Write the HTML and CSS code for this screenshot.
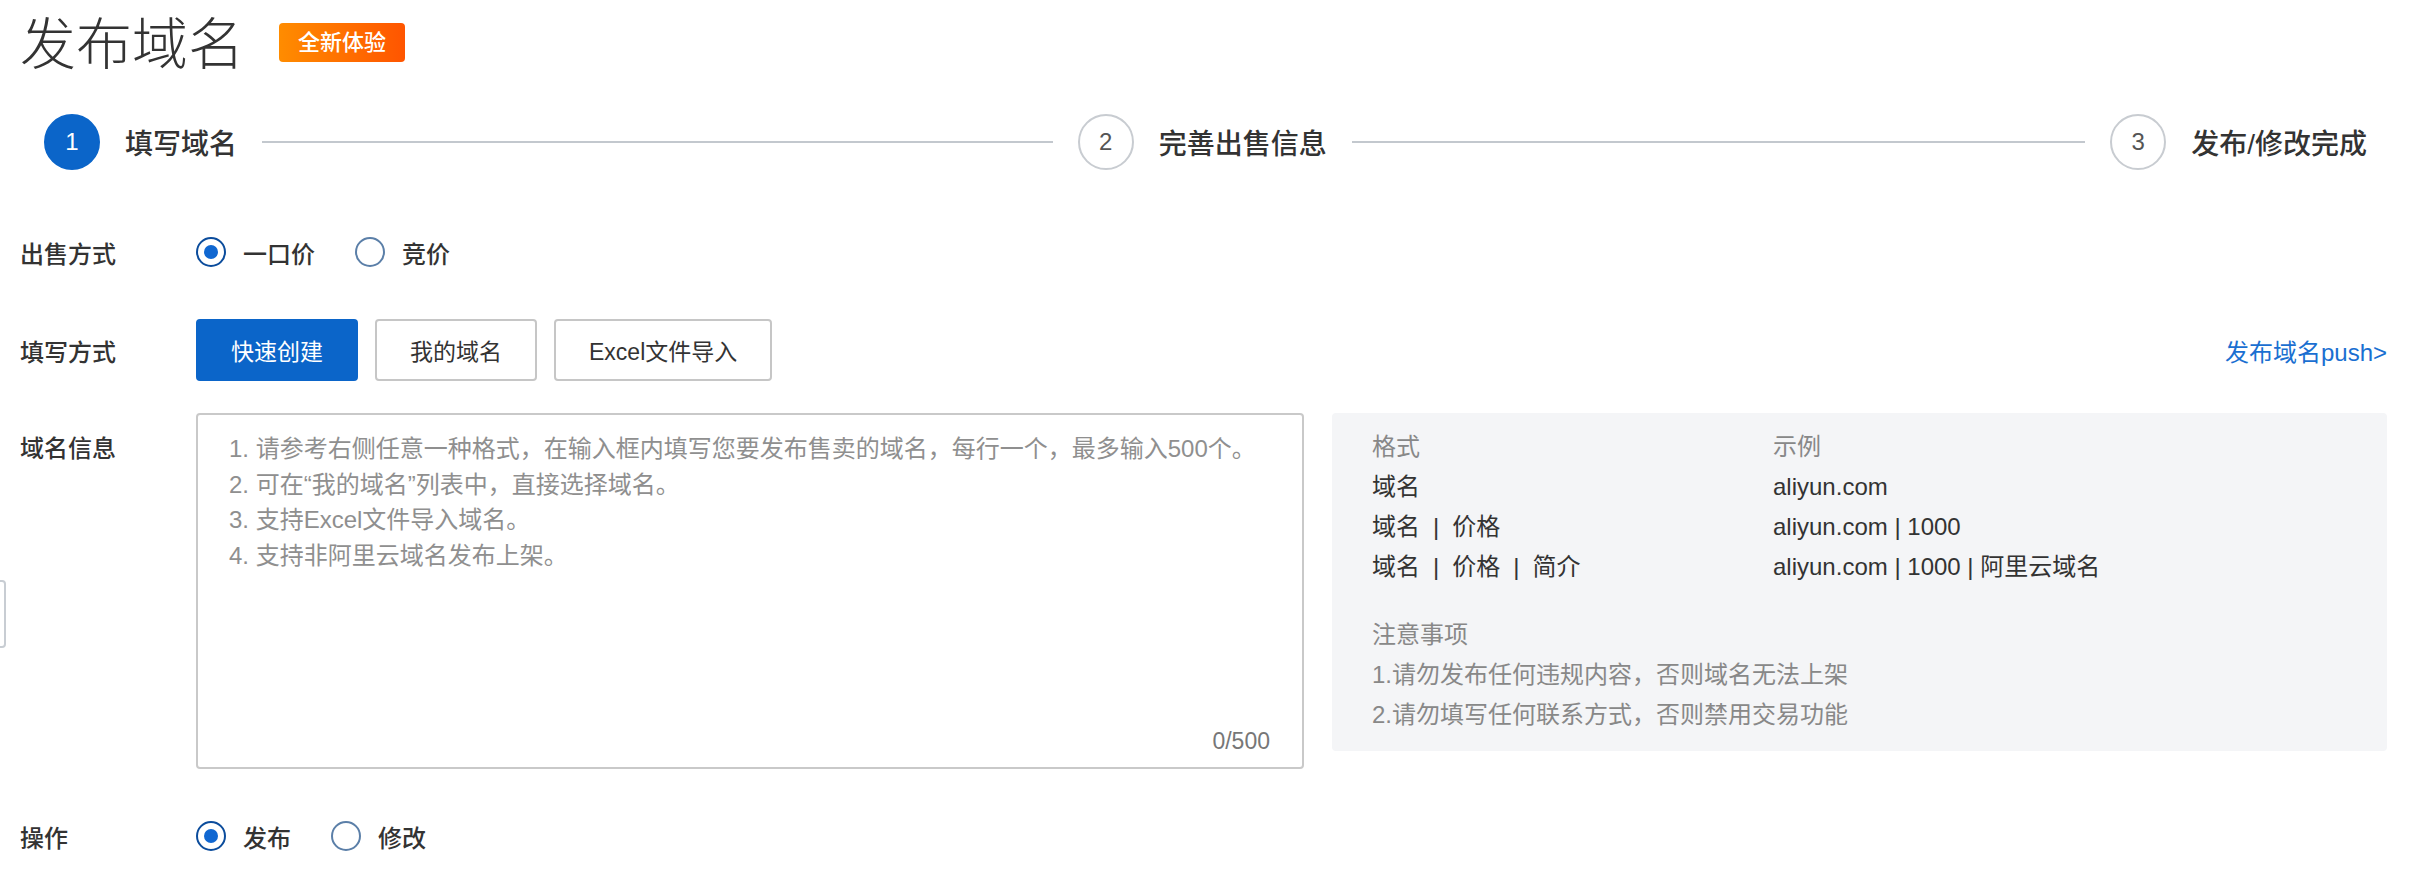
FILE: index.html
```html
<!DOCTYPE html>
<html>
<head>
    <title>发布域名</title>
    <link rel="stylesheet" href="styles.css">
</head>
<body>
    <div class="side-tab"></div>
    <div class="page">
        <div class="header">
            <h1>发布域名</h1>
            <span class="badge">全新体验</span>
        </div>

        <div class="steps">
            <div class="step active">
                <span class="step-num">1</span>
                <span class="step-title">填写域名</span>
            </div>
            <div class="step-line first"></div>
            <div class="step">
                <span class="step-num">2</span>
                <span class="step-title">完善出售信息</span>
            </div>
            <div class="step-line second"></div>
            <div class="step">
                <span class="step-num">3</span>
                <span class="step-title">发布/修改完成</span>
            </div>
        </div>

        <form class="form">
            <div class="row row-sale">
                <label class="row-label">出售方式</label>
                <div class="radios">
                    <span class="radio checked"></span><span class="radio-text">一口价</span>
                    <span class="radio"></span><span class="radio-text">竞价</span>
                </div>
            </div>

            <div class="row row-fill">
                <label class="row-label">填写方式</label>
                <div class="fill-content">
                    <div class="btns">
                        <button type="button" class="btn primary">快速创建</button>
                        <button type="button" class="btn">我的域名</button>
                        <button type="button" class="btn">Excel文件导入</button>
                    </div>
                    <a class="push-link" href="#">发布域名push&gt;</a>
                </div>
            </div>

            <div class="row row-info">
                <label class="row-label">域名信息</label>
                <div class="info-content">
                    <div class="textarea-wrap">
                        <textarea class="domains" placeholder="1. 请参考右侧任意一种格式，在输入框内填写您要发布售卖的域名，每行一个，最多输入500个。&#10;2. 可在“我的域名”列表中，直接选择域名。&#10;3. 支持Excel文件导入域名。&#10;4. 支持非阿里云域名发布上架。"></textarea>
                        <span class="counter">0/500</span>
                    </div>
                    <div class="tips">
                        <div class="tips-row tips-head">
                            <span class="col">格式</span>
                            <span>示例</span>
                        </div>
                        <div class="tips-row">
                            <span class="col">域名</span>
                            <span>aliyun.com</span>
                        </div>
                        <div class="tips-row">
                            <span class="col">域名<span class="sep">|</span>价格</span>
                            <span>aliyun.com | 1000</span>
                        </div>
                        <div class="tips-row">
                            <span class="col">域名<span class="sep">|</span>价格<span class="sep">|</span>简介</span>
                            <span>aliyun.com | 1000 | 阿里云域名</span>
                        </div>
                        <div class="notice-title">注意事项</div>
                        <div class="notice">1.请勿发布任何违规内容，否则域名无法上架</div>
                        <div class="notice">2.请勿填写任何联系方式，否则禁用交易功能</div>
                    </div>
                </div>
            </div>

            <div class="row row-op">
                <label class="row-label">操作</label>
                <div class="radios">
                    <span class="radio checked"></span><span class="radio-text">发布</span>
                    <span class="radio"></span><span class="radio-text">修改</span>
                </div>
            </div>
        </form>
    </div>
</body>
</html>
```

FILE: styles.css
```css
body {
    margin: 0;
    background-color: #fff;
    font-family: "Liberation Sans", "Noto Sans CJK SC", sans-serif;
    color: #333;
}

.page {
    padding: 0 39px 0 20px;
}

.side-tab {
    position: absolute;
    left: -40px;
    top: 580px;
    width: 42px;
    height: 64px;
    border: 2px solid #c8cdd3;
    border-radius: 4px;
    background-color: #fff;
}

.header {
    display: flex;
    align-items: center;
    height: 90px;
}

h1 {
    margin: 0;
    font-size: 56px;
    font-weight: 300;
    line-height: 1;
    color: #333;
}

.badge {
    margin-left: 35px;
    margin-top: -5px;
    height: 39px;
    line-height: 39px;
    padding: 0 19px;
    font-size: 22px;
    font-weight: 500;
    color: #fff;
    border-radius: 4px;
    background: linear-gradient(90deg, #ff8c00, #ff5500);
}

/* steps */
.steps {
    display: flex;
    align-items: center;
    height: 56px;
    margin-top: 24px;
    padding: 0 20px 0 24px;
}

.step {
    display: flex;
    align-items: center;
    gap: 25px;
}

.step-num {
    width: 52px;
    height: 52px;
    border: 2px solid #c8ccd1;
    border-radius: 50%;
    display: flex;
    align-items: center;
    justify-content: center;
    font-size: 24px;
    font-weight: 300;
    color: #555;
}

.step.active .step-num {
    background-color: #0b65c9;
    border-color: #0b65c9;
    color: #fff;
}

.step-title {
    font-size: 28px;
    font-weight: 500;
    color: #333;
}

.step-line {
    flex: 513 1 0;
    height: 2px;
    margin: 0 25px;
    background-color: #c3c8ce;
}

.step-line.second {
    flex-grow: 476;
}

/* form rows */
.form {
    margin: 0;
}

.row {
    display: flex;
    align-items: center;
}

.row-label {
    width: 176px;
    flex-shrink: 0;
    font-size: 24px;
    font-weight: 500;
    color: #333;
}

.row-sale {
    margin-top: 62px;
    height: 40px;
}

.row-fill {
    margin-top: 47px;
    height: 62px;
}

.row-info {
    margin-top: 32px;
    align-items: flex-start;
}

.row-info .row-label {
    margin-top: 16px;
}

.row-op {
    margin-top: 47px;
    height: 40px;
}

.radios {
    display: flex;
    align-items: center;
}

.radio {
    width: 26px;
    height: 26px;
    border: 2px solid #5b7fa8;
    border-radius: 50%;
    display: flex;
    align-items: center;
    justify-content: center;
}

.radio.checked {
    border-color: #0b4c9c;
}

.radio.checked::after {
    content: "";
    width: 14px;
    height: 14px;
    border-radius: 50%;
    background-color: #1067d1;
}

.radio-text {
    margin: 0 40px 0 17px;
    font-size: 24px;
    font-weight: 500;
    color: #333;
}

/* fill mode */
.fill-content {
    flex: 1;
    display: flex;
    align-items: center;
    justify-content: space-between;
}

.btns {
    display: flex;
    gap: 17px;
}

.btn {
    height: 62px;
    padding: 0 33px;
    font-family: inherit;
    font-size: 23px;
    color: #333;
    background-color: #fff;
    border: 2px solid #c6c6c6;
    border-radius: 4px;
    cursor: pointer;
}

.btn.primary {
    background-color: #0b65c9;
    border-color: #0b65c9;
    color: #fff;
}

.push-link {
    font-size: 24px;
    color: #1a6fd1;
    text-decoration: none;
}

/* domain info */
.info-content {
    flex: 1;
    display: flex;
    gap: 28px;
}

.textarea-wrap {
    position: relative;
    width: 1108px;
    height: 356px;
    flex-shrink: 0;
}

.domains {
    width: 100%;
    height: 100%;
    box-sizing: border-box;
    padding: 16px 12px 16px 31px;
    border: 2px solid #c9c9c9;
    border-radius: 4px;
    font-family: inherit;
    font-size: 24px;
    line-height: 35.5px;
    resize: none;
    outline: none;
}

.domains::placeholder {
    color: #8f8f8f;
}

.counter {
    position: absolute;
    right: 34px;
    bottom: 14px;
    font-size: 23px;
    color: #777;
}

.tips {
    flex: 1;
    height: 338px;
    box-sizing: border-box;
    padding: 14px 40px 0;
    background-color: #f4f5f7;
    border-radius: 4px;
    font-size: 24px;
    line-height: 40px;
}

.tips-row {
    display: flex;
}

.tips-row .col {
    width: 401px;
}

.tips-head {
    color: #888;
}

.sep {
    margin: 0 13px;
}

.notice-title {
    margin-top: 28px;
    color: #888;
}

.notice {
    color: #888;
}
```
